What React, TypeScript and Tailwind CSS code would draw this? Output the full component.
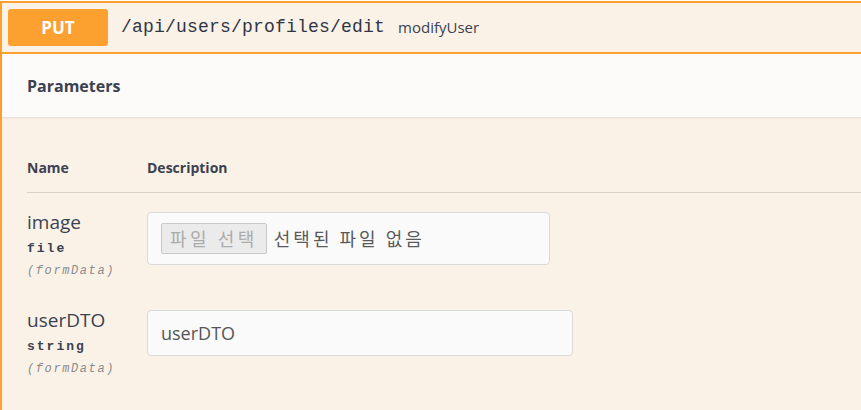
import React from "react";

const sans = { fontFamily: '"Open Sans", "Noto Sans CJK KR", sans-serif' };
const mono = { fontFamily: '"Liberation Mono", "Noto Sans CJK KR", monospace' };
const kr = { fontFamily: '"Noto Sans CJK KR", sans-serif' };

const ParamName = ({ name, type }: { name: string; type: string }) => (
  <div className="w-[120px] shrink-0 text-[#3b4151]">
    <div className="text-[19px] leading-[20px]" style={sans}>
      {name}
    </div>
    <div className="mt-[8px] text-[13px] leading-[18px] font-bold tracking-[2px]" style={mono}>
      {type}
    </div>
    <div className="mt-[5px] text-[12px] leading-[16px] italic text-[#8a8a8a] tracking-[1.6px]" style={mono}>
      (formData)
    </div>
  </div>
);

export default function App() {
  return (
    <div className="min-h-screen bg-white pt-px overflow-hidden" style={sans}>
      <div className="w-[900px] min-h-[420px] border-l-2 border-t-2 border-[#fca130] bg-[#fbf2e7]">
        {/* Header */}
        <div className="flex items-center h-[51px] px-[6px] border-b-2 border-[#fca130]">
          <div className="flex items-center justify-center w-[100px] h-[37px] rounded-[3px] bg-[#fca130] text-white font-bold text-[17px]">
            PUT
          </div>
          <span className="ml-[13px] text-[18px] tracking-[0.2px] text-[#2f3545]" style={mono}>
            /api/users/profiles/edit
          </span>
          <span className="ml-[13px] text-[15px] text-[#3b4151]">modifyUser</span>
        </div>

        {/* Parameters bar */}
        <div className="flex items-center h-[63px] pl-[25px] bg-[#fdfbf9] shadow-[0_1px_2px_rgba(0,0,0,0.1)]">
          <span className="text-[16px] font-bold text-[#3b4151]">Parameters</span>
        </div>

        {/* Table */}
        <div className="pl-[25px] pt-[40px]">
          <div className="flex h-[36px] text-[14px] font-bold text-[#3b4151] border-b border-[#d8d2ca]">
            <div className="w-[120px]">Name</div>
            <div>Description</div>
          </div>

          <div className="flex pt-[19px]">
            <ParamName name="image" type="file" />
            <div className="flex items-center w-[403px] h-[53px] px-[13px] rounded-[4px] border border-[#d9d9d9] bg-[#fafafa]" style={kr}>
              <div className="flex items-center h-[31px] pl-[8px] pr-[8px] rounded-[2px] border border-[#c8c8c8] bg-[#ebebeb] text-[18px] tracking-[3.5px] text-[#ababab]">
                파일 선택
              </div>
              <span className="ml-[7px] text-[18px] tracking-[3px] text-[#5a5a5a]">선택된 파일 없음</span>
            </div>
          </div>

          <div className="flex pt-[31px]">
            <ParamName name="userDTO" type="string" />
            <div className="flex items-center w-[426px] h-[46px] px-[13px] rounded-[4px] border border-[#d9d9d9] bg-[#fafafa] text-[18px] text-[#555]">
              userDTO
            </div>
          </div>
        </div>
      </div>
    </div>
  );
}
